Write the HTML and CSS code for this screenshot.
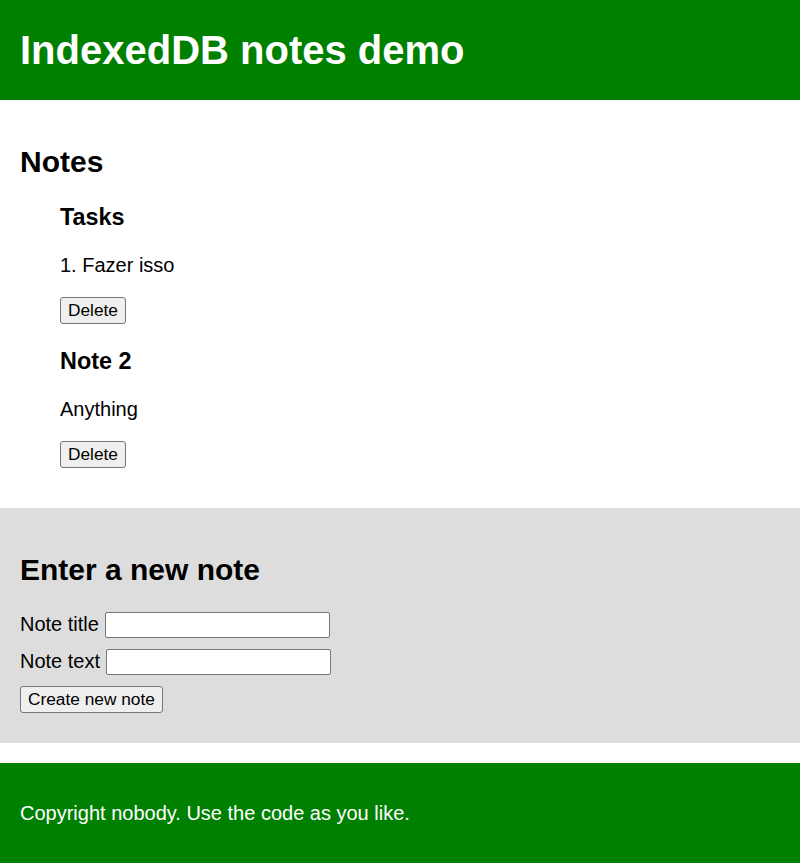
FILE: index.html
```html
<!DOCTYPE html>
<html lang="en">
<head>
<meta charset="utf-8">
<title>IndexedDB notes demo</title>
<link rel="stylesheet" href="styles.css">
</head>
<body>
<header class="site-header"><h1 class="site-title">IndexedDB notes demo</h1></header>
<main>
  <section class="note-display">
    <h2 class="section-title">Notes</h2>
    <ul class="note-list">
      <li class="note">
        <h3 class="note-title">Tasks</h3>
        <p class="note-body">1. Fazer isso</p>
        <button class="btn">Delete</button>
      </li>
      <li class="note">
        <h3 class="note-title">Note 2</h3>
        <p class="note-body">Anything</p>
        <button class="btn">Delete</button>
      </li>
    </ul>
  </section>
  <section class="new-note">
    <h2 class="section-title">Enter a new note</h2>
    <form class="note-form">
      <div class="form-row"><label for="title">Note title</label> <input class="text-input" id="title" type="text"></div>
      <div class="form-row"><label for="body">Note text</label> <input class="text-input" id="body" type="text"></div>
      <div class="form-row"><button class="btn" type="button">Create new note</button></div>
    </form>
  </section>
</main>
<footer class="site-footer"><p class="footer-text">Copyright nobody. Use the code as you like.</p></footer>
</body>
</html>
```

FILE: styles.css
```css
html {
  font-family: "Liberation Sans", Arial, sans-serif;
  font-size: 20px;
}

body {
  margin: 0 auto;
  max-width: 800px;
}

.site-header,
.site-footer {
  background-color: #008000;
  color: #fff;
  line-height: 100px;
  padding: 0 20px;
}

.site-title {
  margin: 0;
  font-size: 40px;
}

.footer-text {
  margin: 20px 0 0;
}

.note-display,
.new-note {
  padding: 20px;
}

.new-note {
  background: #ddd;
}

.section-title {
  font-size: 30px;
  margin: 25px 0;
}

.note-list {
  list-style-type: none;
  margin: 20px 0;
  padding-left: 40px;
}

.note-title {
  font-size: 23.4px;
  margin: 23.4px 0;
}

.note-body {
  margin: 20px 0;
}

.note-form {
  margin: 0;
}

.form-row {
  margin-bottom: 10px;
  height: 27px;
}

.btn {
  font-family: "Liberation Sans", Arial, sans-serif;
  font-size: 17.3px;
  color: #000;
  background: #efefef;
  border: 1px solid #767676;
  border-radius: 3px;
  padding: 2px 7px;
  margin: 0;
}

.text-input {
  box-sizing: border-box;
  width: 225px;
  height: 26px;
  border: 1px solid #767676;
  border-radius: 2px;
  background: #fff;
  font-size: 17.3px;
  font-family: "Liberation Sans", Arial, sans-serif;
  padding: 1px 3px;
  margin: 0;
  vertical-align: baseline;
}
```
